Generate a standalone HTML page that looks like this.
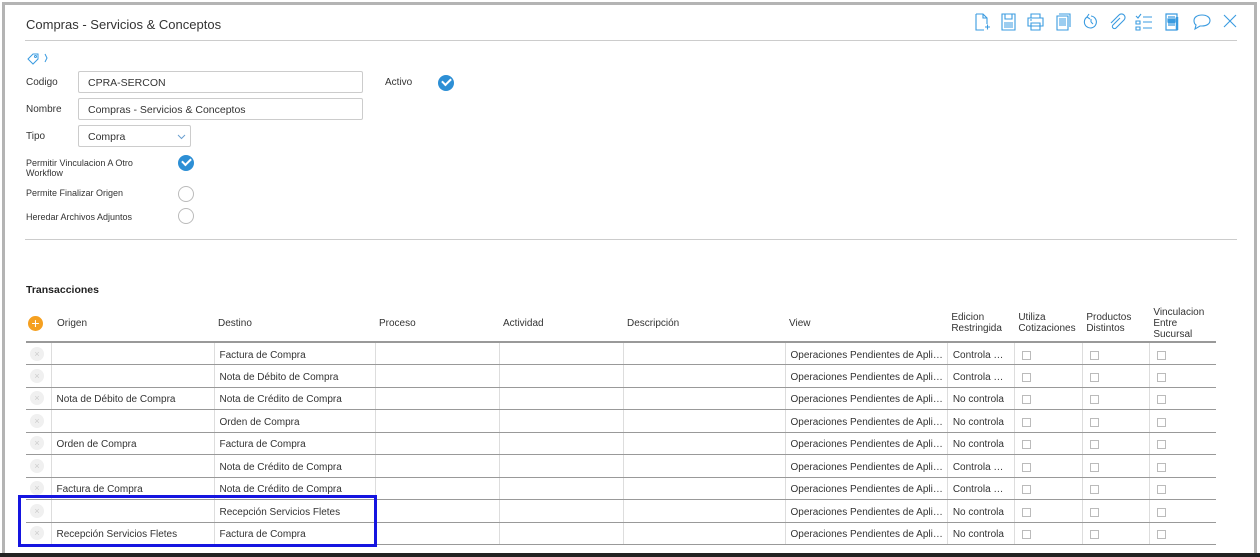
<!DOCTYPE html>
<html><head><meta charset="utf-8"><style>
*{box-sizing:border-box;margin:0;padding:0}
body{width:1260px;height:557px;overflow:hidden;background:#fff;font-family:"Liberation Sans",sans-serif;color:#333;position:relative}
.frame{position:absolute;left:2px;top:2px;width:1255px;height:553px;border:3px solid #b4b4b4;border-bottom:none}
.bot{position:absolute;left:0;top:553px;width:1260px;height:4px;background:#222}
.abs{position:absolute}
.t{font-size:10px;color:#333}
.inp{position:absolute;height:22px;border:1px solid #ccc;border-radius:2px;font-size:10.5px;padding:5px 9px;color:#333}
.chk{position:absolute;width:16px;height:16px;border-radius:50%;background:#2d8fd5}
.chk:after{content:"";position:absolute;left:4px;top:3px;width:7px;height:4px;border-left:2px solid #fff;border-bottom:2px solid #fff;transform:rotate(-45deg)}
.rad{position:absolute;width:16px;height:16px;border-radius:50%;border:1px solid #bbb}
table{position:absolute;left:26px;top:305px;border-collapse:collapse;font-size:10px;table-layout:fixed}
th{font-weight:normal;text-align:left;height:37px;padding:0 4px;border-bottom:2px solid #999;vertical-align:middle;line-height:11px}
td{height:22.5px;border-bottom:1px solid #999;border-left:1px solid #ddd;padding:3px 4px 0 5px;white-space:nowrap;overflow:hidden}
td:first-child{border-left:none;padding:0 0 0 2px}
th:nth-child(2){padding-left:6px}
.x{width:14px;height:14px;border-radius:50%;background:#f0f0f0;color:#ccc;font-size:9px;text-align:center;line-height:14px;margin-left:2px}
.cb{width:9px;height:9px;border:1px solid #bbb;margin-left:2px}
.ic{position:absolute;top:13px}
</style></head><body>
<div class="frame"></div><div class="bot"></div>
<div class="abs" style="left:26px;top:17px;font-size:13px;color:#333">Compras - Servicios &amp; Conceptos</div>
<div class="abs" style="left:25px;top:40px;width:1212px;height:1px;background:#ccc"></div>
<svg class="ic" style="left:973px" width="18" height="18" viewBox="0 0 18 18" fill="none" stroke="#3a9be0" stroke-width="1.1"><path d="M3 1h7l4 4v6M10 1v4h4M3 1v16h8M12 14h5M14.5 11.5v5"/></svg>
<svg class="ic" style="left:1000px" width="18" height="18" viewBox="0 0 18 18" fill="none" stroke="#3a9be0" stroke-width="1.1"><path d="M2 1h13v16H2zM5 1v5h7V1M4 10h9M4 12h9M4 14h9"/></svg>
<svg class="ic" style="left:1027px" width="18" height="18" viewBox="0 0 18 18" fill="none" stroke="#3a9be0" stroke-width="1.1"><path d="M4 5V1h9v4M1 5h15v8H1zM4 10h9v7H4zM3 7h2"/></svg>
<svg class="ic" style="left:1054px" width="18" height="18" viewBox="0 0 18 18" fill="none" stroke="#3a9be0" stroke-width="1.1"><path d="M3 3h11v14H3zM5 1h11v13M5 6h7M5 8h7M5 10h7M5 12h7"/></svg>
<svg class="ic" style="left:1081px" width="18" height="18" viewBox="0 0 18 18" fill="none" stroke="#3a9be0" stroke-width="1.1"><path d="M6 4a6 6 0 1 0 4-1M6 4l2-3M6 4l3 2M10 9v-3M10 9l2 2"/></svg>
<svg class="ic" style="left:1108px" width="18" height="18" viewBox="0 0 18 18" fill="none" stroke="#3a9be0" stroke-width="1.1"><path d="M12 5l-7 7a2 2 0 0 0 3 3l8-8a3 3 0 0 0-5-5L3 10"/></svg>
<svg class="ic" style="left:1135px" width="18" height="18" viewBox="0 0 18 18" fill="none" stroke="#3a9be0" stroke-width="1.1"><path d="M1 3l2 2 3-4M1 8h4v3H1zM1 14h4v3H1zM8 4h9M8 9h9M8 15h9"/></svg>
<svg class="ic" style="left:1163px" width="18" height="18" viewBox="0 0 18 18" fill="none" stroke="#3a9be0" stroke-width="1.2"><path d="M3 1h11v16H3zM5 4h7M5 10h7M5 12h7"/><rect x="5" y="6" width="7" height="3" fill="#3a9be0"/><path d="M14 4v13" stroke-width="2.5"/></svg>
<svg class="ic" style="left:1192px" width="20" height="18" viewBox="0 0 20 18" fill="none" stroke="#3a9be0" stroke-width="1.1"><path d="M10 2c5 0 8 2.5 8 5.5S15 13 10 13H8l-5 3 1-4C2.5 11 2 9 2 7.5 2 4.5 5 2 10 2z"/></svg>
<svg class="ic" style="left:1222px" width="16" height="16" viewBox="0 0 16 16" stroke="#3a9be0" stroke-width="1.1"><path d="M2 2l12 12M14 2L2 14"/></svg>
<svg class="abs" style="left:26px;top:51px" width="22" height="14" viewBox="0 0 22 14" fill="none" stroke="#3a9be0" stroke-width="1"><path d="M2 8l5-5h5v5l-5 5z"/><circle cx="9.5" cy="5.5" r="1"/><path d="M19 3l2 4-2 4"/></svg>
<div class="abs t" style="left:26px;top:77px">Codigo</div>
<div class="inp" style="left:78px;top:71px;width:285px">CPRA-SERCON</div>
<div class="abs t" style="left:385px;top:77px">Activo</div>
<div class="chk" style="left:438px;top:75px"></div>
<div class="abs t" style="left:26px;top:104px">Nombre</div>
<div class="inp" style="left:78px;top:98px;width:285px">Compras - Servicios &amp; Conceptos</div>
<div class="abs t" style="left:26px;top:131px">Tipo</div>
<div class="inp" style="left:78px;top:125px;width:113px">Compra</div>
<svg class="abs" style="left:177px;top:134px" width="9" height="6" fill="none" stroke="#6a9fd0" stroke-width="1"><path d="M1 1l3.5 3.5L8 1"/></svg>
<div class="abs t" style="left:26px;top:158px;font-size:9px;line-height:10px">Permitir Vinculacion A Otro<br>Workflow</div>
<div class="chk" style="left:178px;top:155px"></div>
<div class="abs t" style="left:26px;top:188px;font-size:9px">Permite Finalizar Origen</div>
<div class="rad" style="left:178px;top:186px"></div>
<div class="abs t" style="left:26px;top:212px;font-size:9px">Heredar Archivos Adjuntos</div>
<div class="rad" style="left:178px;top:208px"></div>
<div class="abs" style="left:25px;top:239px;width:1212px;height:1px;background:#ccc"></div>
<div class="abs" style="left:26px;top:284px;font-size:10.5px;font-weight:bold;color:#222">Transacciones</div>
<table>
<colgroup><col style="width:25px"><col style="width:163px"><col style="width:161px"><col style="width:124px"><col style="width:124px"><col style="width:162px"><col style="width:161px"><col style="width:67px"><col style="width:68px"><col style="width:67px"><col style="width:67px"></colgroup>
<tr><th style="padding:0 2px"><div style="width:15px;height:15px;border-radius:50%;background:#f5a020;color:#fff;text-align:center;line-height:15px;font-size:14px">+</div></th><th>Origen</th><th>Destino</th><th>Proceso</th><th>Actividad</th><th>Descripción</th><th>View</th><th>Edicion Restringida</th><th>Utiliza Cotizaciones</th><th>Productos Distintos</th><th>Vinculacion Entre Sucursal</th></tr>
<tr><td><div class="x">×</div></td><td></td><td>Factura de Compra</td><td></td><td></td><td></td><td>Operaciones Pendientes de Apli…</td><td>Controla …</td><td><div class="cb"></div></td><td><div class="cb"></div></td><td><div class="cb"></div></td></tr>
<tr><td><div class="x">×</div></td><td></td><td>Nota de Débito de Compra</td><td></td><td></td><td></td><td>Operaciones Pendientes de Apli…</td><td>Controla …</td><td><div class="cb"></div></td><td><div class="cb"></div></td><td><div class="cb"></div></td></tr>
<tr><td><div class="x">×</div></td><td>Nota de Débito de Compra</td><td>Nota de Crédito de Compra</td><td></td><td></td><td></td><td>Operaciones Pendientes de Apli…</td><td>No controla</td><td><div class="cb"></div></td><td><div class="cb"></div></td><td><div class="cb"></div></td></tr>
<tr><td><div class="x">×</div></td><td></td><td>Orden de Compra</td><td></td><td></td><td></td><td>Operaciones Pendientes de Apli…</td><td>No controla</td><td><div class="cb"></div></td><td><div class="cb"></div></td><td><div class="cb"></div></td></tr>
<tr><td><div class="x">×</div></td><td>Orden de Compra</td><td>Factura de Compra</td><td></td><td></td><td></td><td>Operaciones Pendientes de Apli…</td><td>No controla</td><td><div class="cb"></div></td><td><div class="cb"></div></td><td><div class="cb"></div></td></tr>
<tr><td><div class="x">×</div></td><td></td><td>Nota de Crédito de Compra</td><td></td><td></td><td></td><td>Operaciones Pendientes de Apli…</td><td>Controla …</td><td><div class="cb"></div></td><td><div class="cb"></div></td><td><div class="cb"></div></td></tr>
<tr><td><div class="x">×</div></td><td>Factura de Compra</td><td>Nota de Crédito de Compra</td><td></td><td></td><td></td><td>Operaciones Pendientes de Apli…</td><td>Controla …</td><td><div class="cb"></div></td><td><div class="cb"></div></td><td><div class="cb"></div></td></tr>
<tr><td><div class="x">×</div></td><td></td><td>Recepción Servicios Fletes</td><td></td><td></td><td></td><td>Operaciones Pendientes de Apli…</td><td>No controla</td><td><div class="cb"></div></td><td><div class="cb"></div></td><td><div class="cb"></div></td></tr>
<tr><td><div class="x">×</div></td><td>Recepción Servicios Fletes</td><td>Factura de Compra</td><td></td><td></td><td></td><td>Operaciones Pendientes de Apli…</td><td>No controla</td><td><div class="cb"></div></td><td><div class="cb"></div></td><td><div class="cb"></div></td></tr>
</table>
<div class="abs" style="left:18px;top:495px;width:359px;height:52px;border:3px solid #1515e0"></div>
</body></html>
